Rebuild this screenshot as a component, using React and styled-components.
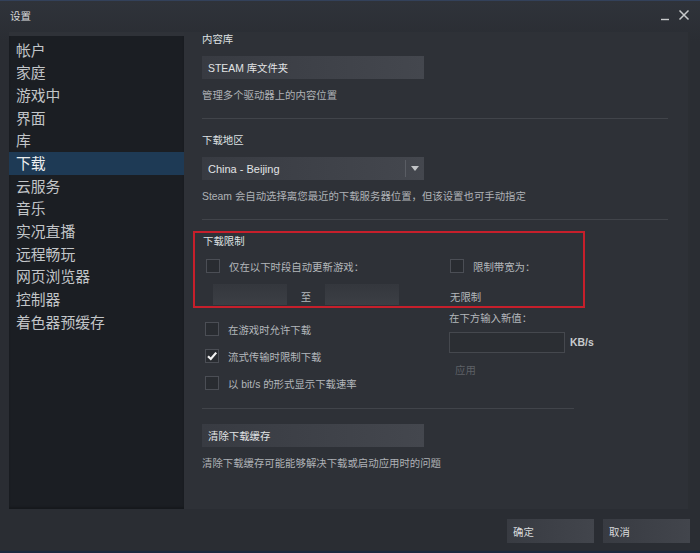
import styled, { createGlobalStyle } from "styled-components"

const GlobalStyle = createGlobalStyle`
  html, body {
    margin: 0;
    padding: 0;
    background: #2a2d33;
  }
  body {
    font-family: "Liberation Sans", "Noto Sans CJK SC", sans-serif;
  }
`

const menu = [
  "帐户",
  "家庭",
  "游戏中",
  "界面",
  "库",
  "下载",
  "云服务",
  "音乐",
  "实况直播",
  "远程畅玩",
  "网页浏览器",
  "控制器",
  "着色器预缓存",
]

function Check({ checked }) {
  return (
    <Box>
      {checked && (
        <svg width="12" height="12" viewBox="0 0 12 12">
          <path d="M2 6.2 L4.8 9 L10.2 2.6" fill="none" stroke="#f2f2f2" strokeWidth="2.2" />
        </svg>
      )}
    </Box>
  )
}

function App() {
  return (
    <>
      <GlobalStyle />
      <Window>
        <TitleBar>
          <Title>设置</Title>
          <Controls>
            <svg width="12" height="12" viewBox="0 0 12 12">
              <path d="M1 10.5 H9" stroke="#c8cacc" strokeWidth="1.4" />
            </svg>
            <svg width="12" height="12" viewBox="0 0 12 12">
              <path d="M1.5 1.5 L10.5 10.5 M10.5 1.5 L1.5 10.5" stroke="#c8cacc" strokeWidth="1.5" />
            </svg>
          </Controls>
        </TitleBar>

        <Body>
          <Sidebar>
            {menu.map((item) => (
              <MenuItem key={item} active={item === "下载"}>
                {item}
              </MenuItem>
            ))}
          </Sidebar>

          <Content>
            <Label>内容库</Label>
            <Button>STEAM 库文件夹</Button>
            <Desc>管理多个驱动器上的内容位置</Desc>
            <Divider />

            <Label>下载地区</Label>
            <Select>
              <span>China - Beijing</span>
              <Arrow>
                <svg width="8" height="5" viewBox="0 0 8 5">
                  <path d="M0 0 H8 L4 5 Z" fill="#c2c4c7" />
                </svg>
              </Arrow>
            </Select>
            <Desc>Steam 会自动选择离您最近的下载服务器位置，但该设置也可手动指定</Desc>
            <Divider />

            <LimitBox>
              <Label>下载限制</Label>
              <LimitGrid>
                <CheckRow indent={3}>
                  <Check />
                  <span>仅在以下时段自动更新游戏：</span>
                </CheckRow>
                <CheckRow>
                  <Check />
                  <span>限制带宽为：</span>
                </CheckRow>
                <TimeRow>
                  <TimeInput />
                  <span>至</span>
                  <TimeInput />
                </TimeRow>
                <Plain offset={6}>无限制</Plain>
              </LimitGrid>
            </LimitBox>

            <Lower>
              <CheckList>
                <CheckRow indent={3}>
                  <Check />
                  <span>在游戏时允许下载</span>
                </CheckRow>
                <CheckRow indent={3}>
                  <Check checked />
                  <span>流式传输时限制下载</span>
                </CheckRow>
                <CheckRow indent={3}>
                  <Check />
                  <span>以 bit/s 的形式显示下载速率</span>
                </CheckRow>
              </CheckList>
              <RateColumn>
                <Plain>在下方输入新值：</Plain>
                <RateRow>
                  <RateInput />
                  <Unit>KB/s</Unit>
                </RateRow>
                <Disabled>应用</Disabled>
              </RateColumn>
            </Lower>

            <Divider short />
            <Button>清除下载缓存</Button>
            <Desc>清除下载缓存可能能够解决下载或启动应用时的问题</Desc>
          </Content>
        </Body>

        <Footer>
          <FooterButton>确定</FooterButton>
          <FooterButton>取消</FooterButton>
        </Footer>
      </Window>
    </>
  )
}

const Window = styled.div`
  width: 700px;
  height: 553px;
  box-sizing: border-box;
  display: flex;
  flex-direction: column;
  background: linear-gradient(180deg, #2f333a 0px, #2a2d33 40px, #2a2d33 100%);
  border-top: 1px solid #33415a;
  border-bottom: 2px solid #1d2a3f;
`

const TitleBar = styled.div`
  height: 31px;
  display: flex;
  align-items: center;
  justify-content: space-between;
  padding: 0 10px 0 10px;
`

const Title = styled.div`
  font-size: 10.5px;
  color: #d6d8da;
  margin-top: -2px;
`

const Controls = styled.div`
  display: flex;
  gap: 6px;
  align-items: center;
  margin-top: -4px;
`

const Body = styled.div`
  height: 477px;
  display: flex;
  padding: 0 10px 0 9px;
`

const Sidebar = styled.div`
  width: 175px;
  flex-shrink: 0;
  box-sizing: border-box;
  background: #1b1e23;
  border-top: 4px solid #2f3238;
  padding-top: 2.5px;
  box-shadow: inset 0 -2px 2px rgba(0, 0, 0, 0.2);
`

const MenuItem = styled.div`
  height: 22.7px;
  line-height: 22.7px;
  padding-left: 7px;
  font-size: 14.8px;
  color: ${(p) => (p.active ? "#eceeef" : "#c2c5c8")};
  background: ${(p) => (p.active ? "#1e3a55" : "transparent")};
  font-family: "Noto Sans CJK SC", sans-serif;
`

const Content = styled.div`
  flex: 1;
  box-sizing: border-box;
  background: #2e3137;
  padding: 0 20px 0 18px;
  display: flex;
  flex-direction: column;
  align-items: flex-start;
  color: #a9adb1;
  font-size: 10.4px;
  border-right: 2px solid #2b2e33;
`

const Label = styled.div`
  line-height: 16px;
  color: #dfe1e3;
  font-size: 10.4px;
`

const Button = styled.div`
  margin-top: 8px;
  width: 222px;
  height: 23px;
  box-sizing: border-box;
  padding-left: 6px;
  display: flex;
  align-items: center;
  background: linear-gradient(90deg, #383b42, #44474e);
  color: #e2e4e6;
  font-size: 10.4px;
`

const Desc = styled.div`
  margin-top: 9px;
  line-height: 16px;
  color: #aeb2b6;
`

const Divider = styled.div`
  align-self: stretch;
  height: 1px;
  margin: 14px 0;
  background: #41444a;
  ${(p) => p.short && "align-self: flex-start; width: 372px; margin: 18px 0 7px;"}
`

const Select = styled(Button)`
  justify-content: space-between;
  padding-right: 0;
  font-size: 11px;
`

const Arrow = styled.div`
  width: 18px;
  height: 17px;
  display: flex;
  align-items: center;
  justify-content: center;
  border-left: 1px solid #5a5d64;
`

const LimitBox = styled.div`
  margin: -3px 0 0 -9px;
  width: 392px;
  box-sizing: border-box;
  border: 2px solid #c61f2b;
  padding: 1px 0 1px 8px;
`

const LimitGrid = styled.div`
  display: grid;
  grid-template-columns: 247px 1fr;
  row-gap: 11px;
  margin-top: 9px;
  align-items: center;
`

const CheckRow = styled.div`
  display: flex;
  align-items: center;
  gap: 9px;
  height: 14px;
  padding-left: ${(p) => p.indent || 0}px;
  color: #b3b7bb;
`

const Box = styled.div`
  width: 14px;
  height: 14px;
  box-sizing: border-box;
  border: 1px solid #4b4e55;
  background: #292c31;
  display: flex;
  align-items: center;
  justify-content: center;
`

const TimeRow = styled.div`
  display: flex;
  align-items: center;
  padding-left: 10px;
  color: #b3b7bb;
  span {
    width: 38px;
    text-align: center;
    margin-top: 4px;
  }
`

const TimeInput = styled.div`
  width: 74px;
  height: 21px;
  background: linear-gradient(180deg, #34373d, #3c3f45);
`

const Plain = styled.div`
  color: #b3b7bb;
  line-height: 14px;
  margin-top: ${(p) => p.offset || 0}px;
`

const Lower = styled.div`
  display: grid;
  grid-template-columns: 247px 1fr;
  width: 420px;
`

const CheckList = styled.div`
  display: flex;
  flex-direction: column;
  gap: 13px;
  padding-top: 14px;
`

const RateColumn = styled.div`
  display: flex;
  flex-direction: column;
  padding-top: 4px;
`

const RateRow = styled.div`
  margin-top: 6px;
  display: flex;
  align-items: center;
  gap: 5px;
`

const RateInput = styled.div`
  width: 116px;
  height: 21px;
  box-sizing: border-box;
  border: 1px solid #45484e;
  background: #2b2e33;
`

const Unit = styled.div`
  color: #c8cbce;
  font-weight: bold;
  font-size: 10.4px;
`

const Disabled = styled.div`
  margin-top: 10px;
  padding-left: 6px;
  color: #5d6066;
  line-height: 16px;
`

const Footer = styled.div`
  flex: 1;
  display: flex;
  justify-content: flex-end;
  align-items: flex-start;
  gap: 9px;
  padding: 10px 10px 0 0;
`

const FooterButton = styled.div`
  width: 87px;
  height: 24px;
  box-sizing: border-box;
  padding-left: 6px;
  display: flex;
  align-items: center;
  background: linear-gradient(90deg, #383b42, #42454c);
  color: #d8dadc;
  font-size: 10.4px;
`

export default App
